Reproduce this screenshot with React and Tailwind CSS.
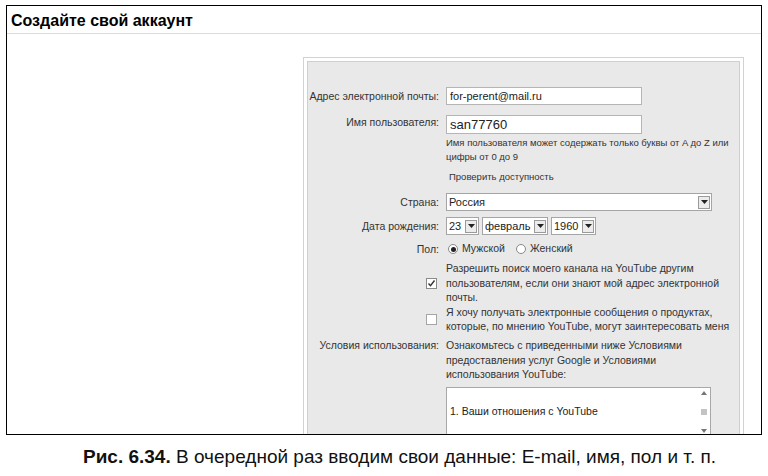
import React from "react";

const F = { fontFamily: '"Liberation Sans", Arial, sans-serif' };

function Arrow() {
  return (
    <span className="flex items-center justify-center w-[12px] h-[13px] border border-[#9a9a9a] bg-[#ececec] mr-[1px] shrink-0">
      <svg width="7" height="4" viewBox="0 0 7 4"><path d="M0 0h7L3.5 4z" fill="#222" /></svg>
    </span>
  );
}

function Select({ value, w, text = "text-[11px]" }) {
  return (
    <div className={`flex items-center justify-between h-[18px] border border-[#a5a5a5] bg-white ${w}`}>
      <span className={`pl-[2px] ${text} text-[#222] leading-none`}>{value}</span>
      <Arrow />
    </div>
  );
}

function Label({ children, className = "" }) {
  return <div className={`text-right text-[10.5px] text-[#333] ${className}`}>{children}</div>;
}

function Radio({ on, label }) {
  return (
    <span className="flex items-center gap-[4px]">
      <span className="w-[10px] h-[10px] rounded-full border border-[#888] bg-white flex items-center justify-center">
        {on && <span className="w-[5px] h-[5px] rounded-full bg-[#222]" />}
      </span>
      <span className="text-[10.5px] text-[#333]">{label}</span>
    </span>
  );
}

export default function App() {
  return (
    <div className="w-[768px] h-[476px] bg-white overflow-hidden" style={F}>
      <div className="ml-[6px] mt-[5px] w-[756px] h-[430px] border-[1.5px] border-black overflow-hidden">
        <div className="h-[28px] pl-[4px] flex items-center border-b border-[#dcdcdc]">
          <span className="text-[16px] font-bold text-black leading-none mt-[2px]">Создайте свой аккаунт</span>
        </div>
        <div className="pl-[296px] pt-[23px]">
          <div className="w-[441px] border border-[#d2d2d2] bg-white p-[3px] pb-0">
            <div className="bg-[#e9e9e9] border border-[#cfcfcf] border-b-0 pt-[25px] h-[420px]">
              <div className="grid grid-cols-[131px_1fr] gap-x-[7px] items-start">
                <Label className="leading-[18px]">Адрес электронной почты:</Label>
                <div className="w-[196px] h-[18px] border border-[#b5b5b5] bg-white flex items-center pl-[3px] text-[11px] text-[#222]">for-perent@mail.ru</div>

                <Label className="mt-[10px] leading-[14px]">Имя пользователя:</Label>
                <div className="mt-[10px] w-[196px] h-[19px] border border-[#b5b5b5] bg-white flex items-center pl-[3px] text-[13px] text-[#222]">san77760</div>

                <div />
                <div className="mt-[2px] text-[9.5px] leading-[14px] text-[#333] pr-[10px]">
                  Имя пользователя может содержать только буквы от A до Z или цифры от 0 до 9
                </div>

                <div />
                <div className="mt-[6px] text-[9.5px] leading-[14px] text-[#333] pl-[3px]">Проверить доступность</div>

                <Label className="mt-[9px] leading-[18px]">Страна:</Label>
                <div className="mt-[9px]"><Select value="Россия" w="w-[266px]" text="text-[11px]" /></div>

                <Label className="mt-[6px] leading-[18px]">Дата рождения:</Label>
                <div className="mt-[6px] flex gap-[3px]">
                  <Select value="23" w="w-[33px]" />
                  <Select value="февраль" w="w-[66px]" />
                  <Select value="1960" w="w-[45px]" />
                </div>

                <Label className="mt-[5px] leading-[18px]">Пол:</Label>
                <div className="mt-[5px] h-[18px] flex items-center gap-[11px] pl-[2px]">
                  <Radio on label="Мужской" />
                  <Radio label="Женский" />
                </div>

                <div className="mt-[3px] flex justify-end items-center h-[44px]">
                  <span className="w-[11px] h-[11px] border border-[#8a8a8a] bg-white flex items-center justify-center mr-[2px]">
                    <svg width="9" height="9" viewBox="0 0 9 9"><path d="M1.5 4.5l2 2.2L7.5 1.5" stroke="#333" strokeWidth="1.4" fill="none" /></svg>
                  </span>
                </div>
                <div className="mt-[3px] text-[10.5px] leading-[14.5px] text-[#333] pr-[14px]">
                  Разрешить поиск моего канала на YouTube другим пользователям, если они знают мой адрес электронной почты.
                </div>

                <div className="flex justify-end items-center h-[29px]">
                  <span className="w-[11px] h-[11px] border border-[#a5a5a5] bg-white mr-[2px]" />
                </div>
                <div className="text-[10.5px] leading-[14px] text-[#333] pr-[6px]">
                  Я хочу получать электронные сообщения о продуктах, которые, по мнению YouTube, могут заинтересовать меня
                </div>

                <Label className="mt-[4px] leading-[14.5px]">Условия использования:</Label>
                <div className="mt-[4px] text-[10.5px] leading-[14.5px] text-[#333] pr-[40px]">
                  Ознакомьтесь с приведенными ниже Условиями предоставления услуг Google и Условиями использования YouTube:
                </div>

                <div />
                <div className="mt-[5px] w-[265px] h-[50px] border border-[#a8a8a8] bg-white flex">
                  <div className="flex-1 flex items-center pl-[3px] text-[10.5px] text-[#222]">1. Ваши отношения с YouTube</div>
                  <div className="w-[12px] flex flex-col items-center justify-between py-[3px]">
                    <svg width="6" height="4" viewBox="0 0 6 4"><path d="M0 4L3 0l3 4z" fill="#777" /></svg>
                    <svg width="6" height="6" viewBox="0 0 6 6"><path d="M0 1h6M0 3h6M0 5h6" stroke="#888" strokeWidth="1" /></svg>
                    <svg width="6" height="4" viewBox="0 0 6 4"><path d="M0 0h6L3 4z" fill="#777" /></svg>
                  </div>
                </div>
              </div>
            </div>
          </div>
        </div>
      </div>
      <div className="mt-[12px] pl-[31px] text-center text-[19px] text-[#111] leading-none">
        <span className="font-bold">Рис. 6.34.</span> В очередной раз вводим свои данные: E-mail, имя, пол и т. п.
      </div>
    </div>
  );
}
